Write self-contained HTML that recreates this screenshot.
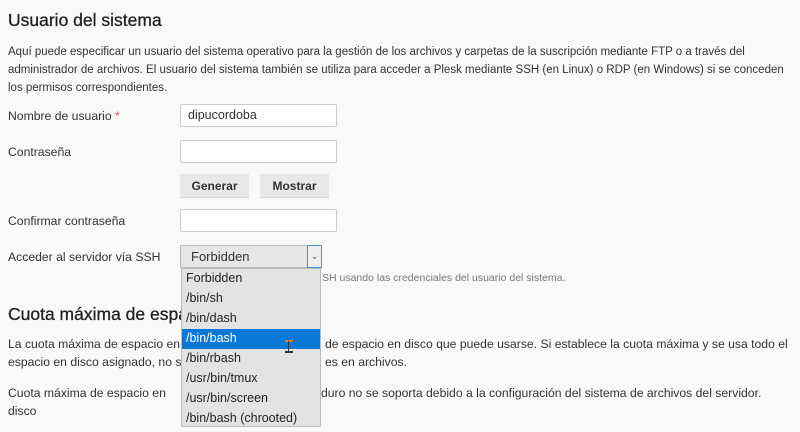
<!DOCTYPE html>
<html><head><meta charset="utf-8"><style>
body{margin:0;width:800px;height:432px;background:#f9f9f9;font-family:"Liberation Sans","DejaVu Sans",sans-serif;color:#333;overflow:hidden;position:relative}
.a{position:absolute;white-space:nowrap}
h2{position:absolute;margin:0;font-weight:normal;font-size:17.5px;color:#222;left:8px;-webkit-text-stroke:0.3px #222}
.p{font-size:12.2px;line-height:18px}
.inp{position:absolute;left:180px;width:157px;height:23px;background:#fff;border:1px solid #ccc;border-radius:2px;box-sizing:border-box;font-size:12.5px;padding:3px 7px}
.btn{position:absolute;top:174px;height:23px;background:#e8e8e8;border-bottom:1px solid #d4d4d4;font-size:12px;font-weight:bold;color:#333;text-align:center;line-height:24px}
.dd{position:absolute;left:181px;top:268px;width:140px;height:159px;background:#e3e3e3;border:1px solid #bbb;box-sizing:border-box;font-size:12.5px;color:#222}
.dd div{height:20px;line-height:19px;padding-left:4px}
</style></head><body>
<h2 style="top:10px">Usuario del sistema</h2>
<div class="a p" style="left:8px;top:43px;font-size:11.5px">Aquí puede especificar un usuario del sistema operativo para la gestión de los archivos y carpetas de la suscripción mediante FTP o a través del<br>administrador de archivos. El usuario del sistema también se utiliza para acceder a Plesk mediante SSH (en Linux) o RDP (en Windows) si se conceden<br>los permisos correspondientes.</div>
<div class="a p" style="left:8px;top:107px">Nombre de usuario <span style="color:#d9534f">*</span></div>
<div class="inp" style="top:104px">dipucordoba</div>
<div class="a p" style="left:8px;top:143px">Contraseña</div>
<div class="inp" style="top:140px"></div>
<div class="btn" style="left:180px;width:69px">Generar</div>
<div class="btn" style="left:260px;width:69px">Mostrar</div>
<div class="a p" style="left:8px;top:212px">Confirmar contraseña</div>
<div class="inp" style="top:209px"></div>
<div class="a p" style="left:8px;top:248px">Acceder al servidor vía SSH</div>
<div class="a" style="left:180px;top:245px;width:141px;height:23px;background:#e6e6e6;border:1px solid #bbb;box-sizing:border-box;font-size:13px;line-height:21px;padding-left:10px;color:#333">Forbidden</div>
<div class="a" style="left:307px;top:245px;width:15px;height:23px;border:1px solid #4a90d9;box-sizing:border-box;background:#eee;font-size:9px;text-align:center;line-height:20px;color:#555">⌄</div>
<div class="a" style="left:322px;top:272px;font-size:10.5px;color:#777">SH usando las credenciales del usuario del sistema.</div>
<h2 style="top:304px">Cuota máxima de espacio</h2>
<div class="a p" style="left:8px;top:335px">La cuota máxima de espacio en d<br>espacio en disco asignado, no se</div>
<div class="a p" style="left:325px;top:335px">de espacio en disco que puede usarse. Si establece la cuota máxima y se usa todo el<br>es en archivos.</div>
<div class="a p" style="left:8px;top:384px">Cuota máxima de espacio en<br>disco</div>
<div class="a p" style="left:321px;top:384px">duro no se soporta debido a la configuración del sistema de archivos del servidor.</div>
<div class="dd">
<div>Forbidden</div><div>/bin/sh</div><div>/bin/dash</div><div style="background:#0a78d7;color:#fff">/bin/bash</div><div>/bin/rbash</div><div>/usr/bin/tmux</div><div>/usr/bin/screen</div><div>/bin/bash (chrooted)</div>
</div>
<div class="a" style="left:285px;top:340px;width:8px;height:13px;border-top:2px solid #e08020;border-bottom:2px solid #333;box-sizing:border-box"></div>
<div class="a" style="left:288px;top:341px;width:1px;height:11px;background:#333"></div>
</body></html>
